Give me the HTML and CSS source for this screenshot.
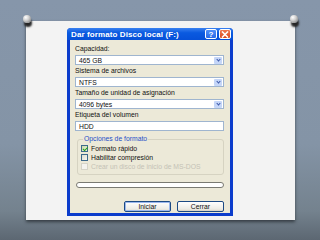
FILE: index.html
```html
<!DOCTYPE html>
<html lang="es">
<head>
  <meta charset="UTF-8" />
  <title>Dar formato</title>
  <link rel="stylesheet" href="styles.css">
</head>
<body>
  <div class="paper">
    <span class="pin pin-left"></span>
    <span class="pin pin-right"></span>

    <div class="dialog">
      <div class="titlebar">
        <span class="title">Dar formato Disco local (F:)</span>
        <span class="tb-btn help">?</span>
        <span class="tb-btn close">
          <svg width="8" height="7" viewBox="0 0 8 7"><path d="M1 0.5 L7 6.5 M7 0.5 L1 6.5" stroke="#fff" stroke-width="1.6"/></svg>
        </span>
      </div>

      <div class="dlg-body">
        <div class="label">Capacidad:</div>
        <div class="combo"><span>465 GB</span><span class="arrow"></span></div>

        <div class="label">Sistema de archivos</div>
        <div class="combo"><span>NTFS</span><span class="arrow"></span></div>

        <div class="label">Tamaño de unidad de asignación</div>
        <div class="combo"><span>4096 bytes</span><span class="arrow"></span></div>

        <div class="label">Etiqueta del volumen</div>
        <div class="combo text"><span>HDD</span></div>

        <fieldset class="group">
          <legend>Opciones de formato</legend>
          <div class="check-row"><span class="check on"></span>Formato rápido</div>
          <div class="check-row"><span class="check"></span>Habilitar compresión</div>
          <div class="check-row disabled"><span class="check"></span>Crear un disco de inicio de MS-DOS</div>
        </fieldset>

        <div class="progress"></div>

        <div class="buttons">
          <span class="btn default">Iniciar</span>
          <span class="btn">Cerrar</span>
        </div>
      </div>
    </div>
  </div>
</body>
</html>
```

FILE: styles.css
```css
* {
  margin: 0;
  padding: 0;
  box-sizing: border-box;
}

body {
  width: 320px;
  height: 240px;
  overflow: hidden;
  padding: 21px 0 0 26px;
  font-family: 'Liberation Sans', Arial, sans-serif;
  background: linear-gradient(to bottom, #8696aa 0%, #8494a6 60%, #74828e 88%, #5c6772 100%);
}

.paper {
  position: relative;
  width: 269px;
  height: 199px;
  padding: 7px 0 0 41px;
  background: #f3f3f3;
  box-shadow: 0 2px 3px rgba(30, 35, 40, 0.7);
}

/* chinchetas */
.pin {
  position: absolute;
  top: -6px;
  width: 8px;
  height: 8px;
  border-radius: 50%;
  background: radial-gradient(circle at 35% 30%, #ffffff 0%, #d0d0d0 40%, #6a6a6a 100%);
  box-shadow: 1px 4px 2px #262626;
}

.pin-left { left: -3px; }
.pin-right { right: -3px; }

.dialog {
  display: flex;
  flex-direction: column;
  width: 166px;
  height: 188px;
  background: #0b3ccc;
  border-radius: 4px 4px 0 0;
}

.titlebar {
  display: flex;
  align-items: center;
  height: 12px;
  padding: 0 2px 0 4px;
  background: linear-gradient(to bottom, #3a80f0 0%, #0a5ae0 40%, #0650d8 100%);
  border-radius: 4px 4px 0 0;
}

.title {
  flex: 1;
  color: #fff;
  font-weight: bold;
  font-size: 8px;
  letter-spacing: 0.1px;
  white-space: nowrap;
}

.tb-btn {
  display: flex;
  align-items: center;
  justify-content: center;
  width: 12px;
  height: 10px;
  margin-left: 2px;
  border: 1px solid #fff;
  border-radius: 2px;
  color: #fff;
  font-weight: bold;
  font-size: 8px;
}

.help { background: linear-gradient(#4f8ff8, #2a6be8); }
.close { background: linear-gradient(#f07a52, #d8481e); }

.dlg-body {
  display: flex;
  flex-direction: column;
  flex: 1;
  margin: 0 3px 3px;
  padding: 5px 6px 0 5px;
  background: #ece9d8;
  font-size: 6.8px;
  color: #111;
}

.label {
  height: 8px;
  line-height: 8px;
  margin-bottom: 2px;
  white-space: nowrap;
}

.combo {
  display: flex;
  align-items: center;
  justify-content: space-between;
  height: 10px;
  margin-bottom: 2px;
  padding: 0 1px 0 3px;
  background: #fff;
  border: 1px solid #9fb5cf;
}

.arrow {
  width: 8px;
  height: 7px;
  border-radius: 1px;
  background: #c5d6f8;
  position: relative;
}

.arrow::after {
  content: "";
  position: absolute;
  left: 2.5px;
  top: 1px;
  width: 2px;
  height: 2px;
  border-right: 1px solid #3a56a8;
  border-bottom: 1px solid #3a56a8;
  transform: rotate(45deg);
}

.group {
  margin: 2px 0 0 2px;
  height: 40px;
  padding: 1px 0 0 3px;
  border: 1px solid #d6d3c2;
  border-radius: 3px;
}

.group legend {
  margin-left: 2px;
  padding: 0 1px;
  color: #1f4fc8;
  line-height: 8px;
}

.check-row {
  display: flex;
  align-items: center;
  height: 9px;
  white-space: nowrap;
}

.check {
  width: 7px;
  height: 7px;
  margin-right: 3px;
  border: 1px solid #3d6a8c;
  background: linear-gradient(135deg, #dcdcd0, #f6f6f0);
  position: relative;
}

.check.on {
  background: linear-gradient(135deg, #c8d8a8, #eef2dc);
}

.check.on::after {
  content: "";
  position: absolute;
  left: 1.5px;
  top: 0;
  width: 2px;
  height: 3.5px;
  border-right: 1.2px solid #22a020;
  border-bottom: 1.2px solid #22a020;
  transform: rotate(45deg);
}

.disabled { color: #c4c2b6; }
.disabled .check { border-color: #d6d4c8; background: #f4f3ee; }

.progress {
  height: 6px;
  margin: 7px 0 0 1px;
  background: #fff;
  border: 1px solid #7a7a72;
  border-radius: 3px;
}

.buttons {
  display: flex;
  justify-content: flex-end;
  gap: 6px;
  margin-top: 13px;
}

.btn {
  display: flex;
  align-items: center;
  justify-content: center;
  width: 47px;
  height: 11px;
  border: 1px solid #1c4a84;
  border-radius: 2px;
  background: linear-gradient(#ffffff, #ecebe4 80%, #d6d0c4);
}

.btn.default {
  box-shadow: inset 0 0 0 1px #9cb8ee;
}
```
